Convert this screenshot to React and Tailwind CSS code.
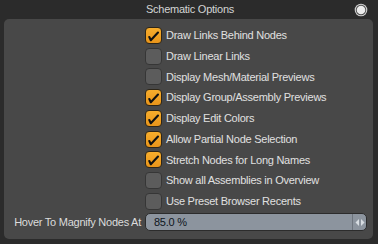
import React from "react";

const options = [
  { label: "Draw Links Behind Nodes", checked: true },
  { label: "Draw Linear Links", checked: false },
  { label: "Display Mesh/Material Previews", checked: false },
  { label: "Display Group/Assembly Previews", checked: true },
  { label: "Display Edit Colors", checked: true },
  { label: "Allow Partial Node Selection", checked: true },
  { label: "Stretch Nodes for Long Names", checked: true },
  { label: "Show all Assemblies in Overview", checked: false },
  { label: "Use Preset Browser Recents", checked: false },
];

const CheckBox = ({ checked }) => (
  <div
    className={
      checked
        ? "w-[17px] h-[17px] rounded-[4px] border border-[#2e2618] bg-gradient-to-b from-[#f7ad2c] to-[#e9951a] flex items-center justify-center"
        : "w-[17px] h-[17px] rounded-[4px] border border-[#363636] bg-[#5c5c5c]"
    }
  >
    {checked && (
      <svg width="15" height="15" viewBox="0 0 15 15">
        <path d="M3.3 9 L4.8 12.2 L12 4.5" fill="none" stroke="#111" strokeWidth="2.1" strokeLinecap="round" strokeLinejoin="round" />
      </svg>
    )}
  </div>
);

export default function App() {
  return (
    <div
      className="w-[378px] h-[244px] bg-[#2b2b2b] flex flex-col text-[11px] tracking-[-0.25px]"
      style={{ fontFamily: '"Liberation Sans", Arial, sans-serif' }}
    >
      <div className="relative h-[19px] flex items-center justify-center text-[#d4d4d4]">
        <span className="pl-[2px]">Schematic Options</span>
        <svg className="absolute right-[10px] top-[3px]" width="14" height="14" viewBox="0 0 14 14">
          <circle cx="7" cy="7" r="6.3" fill="#cfcfcf" />
          <circle cx="7" cy="7" r="5.2" fill="#4a4a4a" />
          <circle cx="7" cy="7" r="4.3" fill="#ececec" />
        </svg>
      </div>
      <div className="ml-[4px] mr-[5px] h-[220px] rounded-[5px] bg-[#484848] pt-[6px] pr-[6px] grid grid-cols-[137px_1fr] gap-x-[4px] content-start">
        {options.map((opt) => (
          <React.Fragment key={opt.label}>
            <div className="h-[20.75px]" />
            <div className="h-[20.75px] flex items-center gap-[4px]">
              <CheckBox checked={opt.checked} />
              <span className="text-[#e0e0e0] whitespace-nowrap">{opt.label}</span>
            </div>
          </React.Fragment>
        ))}
        <div className="h-[21px] flex items-center justify-end text-[#dcdcdc] whitespace-nowrap">
          Hover To Magnify Nodes At
        </div>
        <div className="h-[21px] flex items-center">
          <div className="h-[18px] w-full rounded-[5px] border border-[#2c2c2c] bg-[#8c949e] flex items-center">
            <span className="flex-1 pl-[8px] text-[#0e141c]">85.0 %</span>
            <div className="h-full w-[14px] border-l border-[#6e757e] flex items-center justify-center">
              <svg width="10" height="9" viewBox="0 0 10 9">
                <path d="M0.5 4.5 L4 1 L4 8 Z" fill="#d8dde2" />
                <path d="M9.5 4.5 L6 1 L6 8 Z" fill="#d8dde2" />
              </svg>
            </div>
          </div>
        </div>
      </div>
    </div>
  );
}
